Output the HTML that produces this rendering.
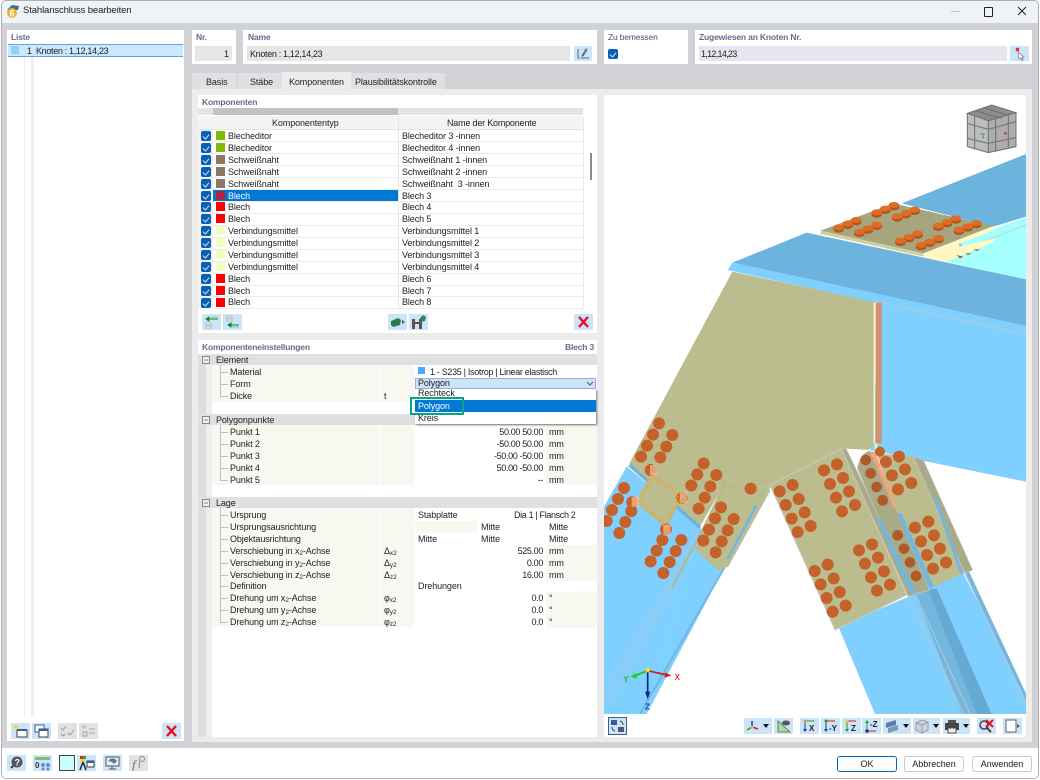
<!DOCTYPE html>
<html><head><meta charset="utf-8"><title>Stahlanschluss bearbeiten</title>
<style>
html,body{margin:0;padding:0;background:#fff}
body{width:1040px;height:780px;position:relative;overflow:hidden;font-family:"Liberation Sans",sans-serif;font-size:9px;color:#222}
.b{position:absolute}
.t{position:absolute;white-space:nowrap;line-height:12px;height:12px;letter-spacing:-.1px}
.n{letter-spacing:-.35px}
.k{letter-spacing:-.7px}
.h{color:#636b90;font-weight:bold;font-size:8.5px;letter-spacing:-.17px}
.t sub{font-size:6.5px;line-height:0;vertical-align:-1px}
.btn{position:absolute;background:#cce4f7;width:19px;height:16px}
.btn svg,.abs svg{position:absolute;left:0;top:0}
.g{background:#e2e2e2}
.c{position:absolute;left:201px;width:10px;height:10px;background:#0a5fb4;border-radius:2px}
.c:after{content:"";position:absolute;left:3px;top:1.5px;width:3px;height:5px;border:solid #cfe4ff;border-width:0 1px 1px 0;transform:rotate(40deg)}
.s{position:absolute;left:216px;width:9px;height:9px}
.rl{position:absolute;left:213px;width:370px;height:1px;background:#ececec}
.big{position:absolute;border-radius:3px;background:#fdfdfd;border:1px solid #c8c8c8;height:16px;line-height:15px;text-align:center;width:60px;font-size:9px;box-sizing:border-box}
</style></head><body>
<!-- window -->
<div class="b" style="left:1px;top:0;width:1038px;height:779px;background:#d2d2d6;border:1px solid #b0b0b0;box-sizing:border-box;border-radius:5px;overflow:hidden">
<div class="b" style="left:0;top:0;width:1038px;height:22px;background:#eef3fa"></div>
<div class="b" style="left:0;top:747px;width:1038px;height:32px;background:#fff"></div>
</div>
<svg class="b" style="left:6px;top:4px" width="14" height="15" viewBox="0 0 14 15"><path d="M1 6 L6 1 L13 2 L12 6 Z" fill="#3d6e8c"/><circle cx="6" cy="9" r="5" fill="#f0b428"/><text x="3.6" y="12.5" font-size="9" font-weight="bold" fill="#fff" font-family="Liberation Sans">6</text></svg>
<div class="t" style="left:23px;top:5px;font-size:9.5px;letter-spacing:-.12px;color:#1a1a1a">Stahlanschluss bearbeiten</div>
<div class="b" style="left:951px;top:11px;width:9px;height:1px;background:#c4c4c4"></div>
<div class="b" style="left:984px;top:7px;width:7px;height:8px;border:1px solid #222;border-radius:1px"></div>
<svg class="b" style="left:1017px;top:6px" width="10" height="10"><path d="M1 1L9 9M9 1L1 9" stroke="#222" stroke-width="1"/></svg>

<!-- list panel -->
<div class="b" style="left:7px;top:30px;width:177px;height:711px;background:#fff"></div>
<div class="t h" style="left:11px;top:31px">Liste</div>
<div class="b" style="left:24px;top:57px;width:1px;height:660px;background:#f0f0f0"></div>
<div class="b" style="left:31px;top:57px;width:3px;height:660px;background:#f0f0f0"></div>
<div class="b" style="left:8px;top:44px;width:175px;height:13px;background:#cce8ff;border:1px solid #5ba6e6;border-width:1px 0;box-sizing:border-box"></div>
<div class="b" style="left:11px;top:46px;width:8px;height:8px;background:#92d3f2"></div>
<div class="t" style="left:27px;top:45px">1</div>
<div class="t" style="left:36px;top:45px;letter-spacing:-.33px">Knoten : 1,12,14,23</div>
<div class="btn" style="left:11px;top:723px"><svg width="19" height="16"><path d="M6 7h10v7H6z" fill="#fff" stroke="#444"/><path d="M6 6h10v2H6z" fill="#3a5a9a"/><path d="M5 1l1 2 2 0-1.500 1.500.5 2-2-1-2 1 .5-2L2 3l2 0z" fill="#f4d020"/></svg></div>
<div class="btn" style="left:32px;top:723px"><svg width="19" height="16"><path d="M3 2h9v7H3z" fill="#fff" stroke="#3a5a9a"/><path d="M7 6h9v8H7z" fill="#fff" stroke="#444"/><path d="M7 6h9v2H7z" fill="#3a5a9a"/></svg></div>
<div class="btn g" style="left:58px;top:723px"><svg width="19" height="16"><path d="M3 5l2 2 3-4M10 10l2 2 4-5M3 11l2 2 2-2" stroke="#999" fill="none"/></svg></div>
<div class="btn g" style="left:79px;top:723px"><svg width="19" height="16"><path d="M3 3l2 2 2-3M4 9h4v4H4zM10 6h6M10 10h6" stroke="#aaa" fill="none"/></svg></div>
<div class="btn" style="left:162px;top:723px"><svg width="19" height="16"><path d="M5 3l9 10M14 3l-9 10" stroke="#e8101c" stroke-width="2.400"/></svg></div>

<!-- header panels -->
<div class="b" style="left:192px;top:30px;width:44px;height:34px;background:#fff"></div>
<div class="t h" style="left:196px;top:31px">Nr.</div>
<div class="b" style="left:195px;top:46px;width:37px;height:15px;background:#e6e6e6"></div>
<div class="t" style="left:224px;top:48px">1</div>
<div class="b" style="left:243px;top:30px;width:354px;height:34px;background:#fff"></div>
<div class="t h" style="left:248px;top:31px">Name</div>
<div class="b" style="left:247px;top:46px;width:323px;height:15px;background:#e6e6e6"></div>
<div class="t" style="left:250px;top:48px;letter-spacing:-.33px">Knoten : 1,12,14,23</div>
<div class="btn" style="left:574px;top:46px;height:15px;width:18px"><svg width="18" height="15"><path d="M4 3v9h2M7 12h8M8 10l4-7 1 1-4 6z" stroke="#5a6a70" fill="none"/></svg></div>
<div class="b" style="left:604px;top:30px;width:84px;height:34px;background:#fff"></div>
<div class="t h" style="left:608px;top:31px;font-weight:normal;color:#4a5278">Zu bemessen</div>
<div class="c" style="left:608px;top:49px"></div>
<div class="b" style="left:695px;top:30px;width:337px;height:34px;background:#fff"></div>
<div class="t h" style="left:699px;top:31px">Zugewiesen an Knoten Nr.</div>
<div class="b" style="left:699px;top:46px;width:308px;height:15px;background:#e6e6f0"></div>
<div class="t k" style="left:701px;top:48px">1,12,14,23</div>
<div class="btn" style="left:1010px;top:46px;height:15px"><svg width="19" height="15"><path d="M8 6l6 5-2 .5 1 2.500-1 .5-1-2.500-2 1z" fill="#fff" stroke="#777" stroke-width=".7"/><path d="M6 2l3 3M9 2L6 5" stroke="#e01020" stroke-width="1.300"/></svg></div>

<!-- tabs -->
<div class="b" style="left:192px;top:73px;width:45px;height:16px;background:#e0e0e4"></div>
<div class="b" style="left:238px;top:73px;width:44px;height:16px;background:#e0e0e4"></div>
<div class="b" style="left:351px;top:73px;width:94px;height:16px;background:#e0e0e4"></div>
<div class="b" style="left:192px;top:89px;width:840px;height:653px;background:#ececec"></div>
<div class="b" style="left:282px;top:72px;width:69px;height:17px;background:#ececec"></div>
<div class="t" style="left:206px;top:76px">Basis</div>
<div class="t" style="left:250px;top:76px">Stäbe</div>
<div class="t" style="left:289px;top:76px">Komponenten</div>
<div class="t" style="left:355px;top:76px">Plausibilitätskontrolle</div>

<!-- Komponenten panel -->
<div class="b" style="left:198px;top:95px;width:399px;height:238px;background:#fff"></div>
<div class="t h" style="left:202px;top:96px">Komponenten</div>
<div class="b" style="left:198px;top:108px;width:15px;height:7px;background:#e4e4e4"></div>
<div class="b" style="left:213px;top:108px;width:185px;height:7px;background:#c2c2c2"></div>
<div class="b" style="left:398px;top:108px;width:185px;height:7px;background:#e4e4e4"></div>
<div class="b" style="left:198px;top:116px;width:385px;height:14px;background:#f4f4f4;border-bottom:1px solid #e2e2e2;box-sizing:border-box"></div>
<div class="b" style="left:198px;top:130px;width:15px;height:178px;background:#f0f0f0"></div>
<div class="b" style="left:398px;top:116px;width:1px;height:192px;background:#e4e4e4"></div>
<div class="b" style="left:583px;top:116px;width:1px;height:192px;background:#eaeaea"></div>
<div class="b" style="left:590px;top:153px;width:2px;height:27px;background:#8a8a8a"></div>
<div class="t" style="left:272px;top:117px">Komponententyp</div>
<div class="t" style="left:447px;top:117px;letter-spacing:-.2px">Name der Komponente</div>

<div class="b" style="left:213px;top:190px;width:185px;height:12px;background:#0078d4"></div>
<div class="rl" style="top:141px"></div><div class="rl" style="top:153px"></div><div class="rl" style="top:165px"></div><div class="rl" style="top:177px"></div><div class="rl" style="top:189px"></div><div class="rl" style="top:201px"></div><div class="rl" style="top:213px"></div><div class="rl" style="top:225px"></div><div class="rl" style="top:237px"></div><div class="rl" style="top:249px"></div><div class="rl" style="top:261px"></div><div class="rl" style="top:273px"></div><div class="rl" style="top:285px"></div><div class="rl" style="top:296px"></div><div class="rl" style="top:308px"></div>

<div class="c" style="top:131px"></div><div class="s" style="top:131px;background:#7fba00"></div><div class="t" style="left:228px;top:130px">Blecheditor</div><div class="t" style="left:402px;top:130px">Blecheditor 3 -innen</div>
<div class="c" style="top:143px"></div><div class="s" style="top:143px;background:#7fba00"></div><div class="t" style="left:228px;top:142px">Blecheditor</div><div class="t" style="left:402px;top:142px">Blecheditor 4 -innen</div>
<div class="c" style="top:155px"></div><div class="s" style="top:155px;background:#8c7864"></div><div class="t" style="left:228px;top:154px">Schweißnaht</div><div class="t" style="left:402px;top:154px">Schweißnaht 1 -innen</div>
<div class="c" style="top:167px"></div><div class="s" style="top:167px;background:#8c7864"></div><div class="t" style="left:228px;top:166px">Schweißnaht</div><div class="t" style="left:402px;top:166px">Schweißnaht 2 -innen</div>
<div class="c" style="top:179px"></div><div class="s" style="top:179px;background:#8c7864"></div><div class="t" style="left:228px;top:178px">Schweißnaht</div><div class="t" style="left:402px;top:178px">Schweißnaht&nbsp; 3 -innen</div>
<div class="c" style="top:191px"></div><div class="s" style="top:191px;background:#b3243c"></div><div class="t" style="left:228px;top:190px;color:#fff">Blech</div><div class="t" style="left:402px;top:190px">Blech 3</div>
<div class="c" style="top:202px"></div><div class="s" style="top:202px;background:#f00"></div><div class="t" style="left:228px;top:201px">Blech</div><div class="t" style="left:402px;top:201px">Blech 4</div>
<div class="c" style="top:214px"></div><div class="s" style="top:214px;background:#f00"></div><div class="t" style="left:228px;top:213px">Blech</div><div class="t" style="left:402px;top:213px">Blech 5</div>
<div class="c" style="top:226px"></div><div class="s" style="top:226px;background:#efffc0"></div><div class="t" style="left:228px;top:225px">Verbindungsmittel</div><div class="t" style="left:402px;top:225px">Verbindungsmittel 1</div>
<div class="c" style="top:238px"></div><div class="s" style="top:238px;background:#efffc0"></div><div class="t" style="left:228px;top:237px">Verbindungsmittel</div><div class="t" style="left:402px;top:237px">Verbindungsmittel 2</div>
<div class="c" style="top:250px"></div><div class="s" style="top:250px;background:#efffc0"></div><div class="t" style="left:228px;top:249px">Verbindungsmittel</div><div class="t" style="left:402px;top:249px">Verbindungsmittel 3</div>
<div class="c" style="top:262px"></div><div class="s" style="top:262px;background:#efffc0"></div><div class="t" style="left:228px;top:261px">Verbindungsmittel</div><div class="t" style="left:402px;top:261px">Verbindungsmittel 4</div>
<div class="c" style="top:274px"></div><div class="s" style="top:274px;background:#f00"></div><div class="t" style="left:228px;top:273px">Blech</div><div class="t" style="left:402px;top:273px">Blech 6</div>
<div class="c" style="top:286px"></div><div class="s" style="top:286px;background:#f00"></div><div class="t" style="left:228px;top:285px">Blech</div><div class="t" style="left:402px;top:285px">Blech 7</div>
<div class="c" style="top:298px"></div><div class="s" style="top:298px;background:#f00"></div><div class="t" style="left:228px;top:296px">Blech</div><div class="t" style="left:402px;top:296px">Blech 8</div>

<div class="btn" style="left:202px;top:314px"><svg width="19" height="16"><path d="M4 9h5v2H4zM4 12h5v2H4z" fill="#eee" stroke="#999" stroke-width=".6"/><path d="M4 5h12M4 5l3-2v4z" stroke="#0a8a28" fill="#0a8a28"/><path d="M9 3h7" stroke="#8c8"/></svg></div>
<div class="btn" style="left:223px;top:314px"><svg width="19" height="16"><path d="M4 2h5v2H4zM4 5h5v2H4z" fill="#eee" stroke="#999" stroke-width=".6"/><path d="M5 11h11M5 11l3-2v4z" stroke="#0a8a28" fill="#0a8a28"/><path d="M9 13h7" stroke="#8c8"/></svg></div>
<div class="btn" style="left:388px;top:314px"><svg width="19" height="16"><path d="M3 7l7-3 3 2-1 5-7 2-2-2z" fill="#2a7a50"/><path d="M14 6l3 2-3 2z" fill="#555"/></svg></div>
<div class="btn" style="left:409px;top:314px"><svg width="19" height="16"><path d="M3 5h10v10H3z" fill="#555"/><path d="M6 5h4v3H6z" fill="#ddd"/><path d="M6 10h4v5H6z" fill="#ddd"/><path d="M11 4l3-3 3 2-1 4-4 1z" fill="#2a8a58"/></svg></div>
<div class="btn" style="left:574px;top:314px"><svg width="19" height="16"><path d="M5 3l9 10M14 3l-9 10" stroke="#e8101c" stroke-width="2.400"/></svg></div>

<!-- settings panel -->
<div class="b" style="left:198px;top:340px;width:399px;height:397px;background:#fff"></div>
<div class="t h" style="left:202px;top:341px">Komponenteneinstellungen</div>
<div class="t h" style="left:565px;top:341px">Blech 3</div>
<div class="b" style="left:198px;top:354px;width:8px;height:383px;background:#dedede"></div>
<div class="b" style="left:206px;top:354px;width:6px;height:383px;background:#efefef"></div>
<div class="b" style="left:198px;top:354px;width:399px;height:11px;background:#e0e0e0"></div>
<div class="b" style="left:198px;top:414px;width:399px;height:11px;background:#e0e0e0"></div>
<div class="b" style="left:198px;top:497px;width:399px;height:11px;background:#e0e0e0"></div>
<div class="b" style="left:212px;top:365px;width:168px;height:37px;background:#f8f8f0"></div>
<div class="b" style="left:381px;top:365px;width:33px;height:37px;background:#f8f8f0"></div>
<div class="b" style="left:212px;top:425px;width:168px;height:60px;background:#f8f8f0"></div>
<div class="b" style="left:381px;top:425px;width:33px;height:60px;background:#f8f8f0"></div>
<div class="b" style="left:546px;top:425px;width:51px;height:60px;background:#f8f8f0"></div>
<div class="b" style="left:212px;top:508px;width:168px;height:119px;background:#f8f8f0"></div>
<div class="b" style="left:381px;top:508px;width:33px;height:119px;background:#f8f8f0"></div>
<div class="b" style="left:546px;top:545px;width:51px;height:36px;background:#f8f8f0"></div>
<div class="b" style="left:546px;top:592px;width:51px;height:36px;background:#f8f8f0"></div>
<div class="b" style="left:415px;top:521px;width:62px;height:12px;background:#f8f8f0"></div>
<svg class="b" style="left:198px;top:354px" width="40" height="280" fill="none" stroke="#c0c0c0" stroke-width="1"><path d="M22.500 11V42.500H30M22.500 18.500H30M22.500 30.500H30M22.500 71V126.500H30M22.500 78.500H30M22.500 90.500H30M22.500 102.500H30M22.500 114.500H30M22.500 154V268.500H30M22.500 161.500H30M22.500 173.500H30M22.500 185.500H30M22.500 197.500H30M22.500 209.500H30M22.500 221.500H30M22.500 232.500H30M22.500 244.500H30M22.500 256.500H30"/><path d="M4.500 2.500h7v7h-7zM6 6h4M4.500 62.500h7v7h-7zM6 66h4M4.500 145.500h7v7h-7zM6 149h4" stroke="#888" fill="#eee"/></svg>
<div class="t" style="left:216px;top:354px">Element</div>
<div class="t" style="left:230px;top:366px">Material</div>
<div class="t" style="left:230px;top:378px">Form</div>
<div class="t" style="left:230px;top:390px">Dicke</div>
<div class="t" style="left:384px;top:390px">t</div>
<div class="b" style="left:418px;top:367px;width:7px;height:7px;background:#4da6ff"></div>
<div class="t" style="left:430px;top:366px;letter-spacing:-.32px">1 - S235 | Isotrop | Linear elastisch</div>
<div class="t" style="left:216px;top:414px">Polygonpunkte</div>
<div class="t" style="left:230px;top:426px">Punkt 1</div><div class="t n" style="right:497px;top:426px">50.00 50.00</div><div class="t" style="left:549px;top:426px">mm</div>
<div class="t" style="left:230px;top:438px">Punkt 2</div><div class="t n" style="right:497px;top:438px">-50.00 50.00</div><div class="t" style="left:549px;top:438px">mm</div>
<div class="t" style="left:230px;top:450px">Punkt 3</div><div class="t n" style="right:497px;top:450px">-50.00 -50.00</div><div class="t" style="left:549px;top:450px">mm</div>
<div class="t" style="left:230px;top:462px">Punkt 4</div><div class="t n" style="right:497px;top:462px">50.00 -50.00</div><div class="t" style="left:549px;top:462px">mm</div>
<div class="t" style="left:230px;top:474px">Punkt 5</div><div class="t n" style="right:497px;top:474px">--</div><div class="t" style="left:549px;top:474px">mm</div>
<div class="t" style="left:216px;top:497px">Lage</div>
<div class="t" style="left:230px;top:509px">Ursprung</div><div class="t" style="left:418px;top:509px">Stabplatte</div><div class="t n" style="left:514px;top:509px">Dia 1 | Flansch 2</div>
<div class="t" style="left:230px;top:521px">Ursprungsausrichtung</div><div class="t" style="left:481px;top:521px">Mitte</div><div class="t" style="left:549px;top:521px">Mitte</div>
<div class="t" style="left:230px;top:533px">Objektausrichtung</div><div class="t" style="left:418px;top:533px">Mitte</div><div class="t" style="left:481px;top:533px">Mitte</div><div class="t" style="left:549px;top:533px">Mitte</div>
<div class="t" style="left:230px;top:545px">Verschiebung in x<sub>2</sub>-Achse</div><div class="t" style="left:384px;top:545px">Δ<sub>x2</sub></div><div class="t n" style="right:497px;top:545px">525.00</div><div class="t" style="left:549px;top:545px">mm</div>
<div class="t" style="left:230px;top:557px">Verschiebung in y<sub>2</sub>-Achse</div><div class="t" style="left:384px;top:557px">Δ<sub>y2</sub></div><div class="t n" style="right:497px;top:557px">0.00</div><div class="t" style="left:549px;top:557px">mm</div>
<div class="t" style="left:230px;top:569px">Verschiebung in z<sub>2</sub>-Achse</div><div class="t" style="left:384px;top:569px">Δ<sub>z2</sub></div><div class="t n" style="right:497px;top:569px">16.00</div><div class="t" style="left:549px;top:569px">mm</div>
<div class="t" style="left:230px;top:580px">Definition</div><div class="t" style="left:418px;top:580px">Drehungen</div>
<div class="t" style="left:230px;top:592px">Drehung um x<sub>2</sub>-Achse</div><div class="t" style="left:384px;top:592px">φ<sub>x2</sub></div><div class="t n" style="right:497px;top:592px">0.0</div><div class="t" style="left:549px;top:592px">°</div>
<div class="t" style="left:230px;top:604px">Drehung um y<sub>2</sub>-Achse</div><div class="t" style="left:384px;top:604px">φ<sub>y2</sub></div><div class="t n" style="right:497px;top:604px">0.0</div><div class="t" style="left:549px;top:604px">°</div>
<div class="t" style="left:230px;top:616px">Drehung um z<sub>2</sub>-Achse</div><div class="t" style="left:384px;top:616px">φ<sub>z2</sub></div><div class="t n" style="right:497px;top:616px">0.0</div><div class="t" style="left:549px;top:616px">°</div>

<!-- dropdown -->
<div class="b" style="left:415px;top:389px;width:181px;height:35px;background:#fff;box-shadow:1px 1px 2px #777"></div>
<div class="b" style="left:415px;top:378px;width:181px;height:11px;background:#cce4f7;border:1px solid #a0a8e4;box-sizing:border-box"></div>
<div class="t" style="left:418px;top:377px">Polygon</div>
<svg class="b" style="left:586px;top:381px" width="8" height="6"><path d="M1 1l3 3 3-3" stroke="#555" fill="none"/></svg>
<div class="t" style="left:418px;top:387px">Rechteck</div>
<div class="b" style="left:415px;top:400px;width:181px;height:12px;background:#0078d4"></div>
<div class="t" style="left:418px;top:400px;color:#fff">Polygon</div>
<div class="b" style="left:413px;top:401px;width:1px;height:10px;background:#fff"></div>
<div class="b" style="left:410px;top:397px;width:54px;height:18px;border:2px solid #00a884;box-sizing:border-box"></div>
<div class="t" style="left:418px;top:412px">Kreis</div>

<!-- viewport -->
<div class="b" style="left:604px;top:95px;width:422px;height:642px;background:#fff;border-radius:3px"></div>
<svg class="b" style="left:604px;top:95px" width="422" height="619" viewBox="604 95 422 619">
<g transform="translate(600,410) scale(.33333)">
<path d="M12 290L80 170 300 350 140 912H12Z" fill="#7fcfff"/>
<path d="M140 912L300 350 375 470 140 912Z" fill="#7fcfff"/>
<path d="M715 650L1090 490 1278 860V912H825Z" fill="#7fcfff"/>
<path d="M945 550L985 540 1170 912H1085Z" fill="#74b7de"/>
<path d="M985 540L1010 535 1175 912H1130Z" fill="#66aad4"/>
<path d="M1105 480L1278 850V872L1095 490Z" fill="#74b7de"/>
<path d="M925 555L1090 912M945 550L1110 912M1095 490L1278 880" stroke="#b8c8d0" stroke-width="3" fill="none"/>
<path d="M12 860L295 360M30 880L305 370" stroke="#b8c4cc" stroke-width="3" fill="none"/>
<path d="M120 912L375 470" stroke="#74b7de" stroke-width="6" fill="none"/>
</g>
<g transform="translate(600,90) scale(.33333)">
<path d="M905 340L1278 192V380L1180 410Z" fill="#6cb4de"/>
<path d="M1040 515L1085 480 1085 452 1278 382V568Z" fill="#a6ffff"/>
<path d="M1085 480L1278 405" stroke="#c0d0d0" stroke-width="3"/>
<path d="M1075 460H1085V485L1075 490Z" fill="#7fcfff"/>
<path d="M970 490L1180 408 1183 420 1075 462 1078 470 1183 445 1183 455 1040 515 1010 510 970 500Z" fill="#fff8c0"/>
<path d="M662 422L880 340 1180 408 970 490Z" fill="#a5a67f"/>
<path d="M662 422L970 490V500L662 432Z" fill="#cfcf9f"/>
<g fill="#b5541c"><ellipse cx="716" cy="418" rx="16" ry="10"/><ellipse cx="743" cy="407" rx="16" ry="10"/><ellipse cx="769" cy="396" rx="16" ry="10"/><ellipse cx="778" cy="431" rx="16" ry="10"/><ellipse cx="804" cy="421" rx="16" ry="10"/><ellipse cx="830" cy="410" rx="16" ry="10"/><ellipse cx="830" cy="373" rx="16" ry="10"/><ellipse cx="856" cy="362" rx="16" ry="10"/><ellipse cx="882" cy="351" rx="16" ry="10"/><ellipse cx="892" cy="385" rx="16" ry="10"/><ellipse cx="918" cy="375" rx="16" ry="10"/><ellipse cx="944" cy="365" rx="16" ry="10"/><ellipse cx="901" cy="458" rx="16" ry="10"/><ellipse cx="927" cy="447" rx="16" ry="10"/><ellipse cx="953" cy="436" rx="16" ry="10"/><ellipse cx="963" cy="471" rx="16" ry="10"/><ellipse cx="989" cy="461" rx="16" ry="10"/><ellipse cx="1015" cy="450" rx="16" ry="10"/><ellipse cx="1015" cy="413" rx="16" ry="10"/><ellipse cx="1041" cy="402" rx="16" ry="10"/><ellipse cx="1067" cy="391" rx="16" ry="10"/><ellipse cx="1077" cy="425" rx="16" ry="10"/><ellipse cx="1103" cy="415" rx="16" ry="10"/><ellipse cx="1129" cy="405" rx="16" ry="10"/></g>
<g fill="#de6c22"><ellipse cx="716" cy="412" rx="16" ry="9"/><ellipse cx="743" cy="401" rx="16" ry="9"/><ellipse cx="769" cy="390" rx="16" ry="9"/><ellipse cx="778" cy="425" rx="16" ry="9"/><ellipse cx="804" cy="415" rx="16" ry="9"/><ellipse cx="830" cy="404" rx="16" ry="9"/><ellipse cx="830" cy="367" rx="16" ry="9"/><ellipse cx="856" cy="356" rx="16" ry="9"/><ellipse cx="882" cy="345" rx="16" ry="9"/><ellipse cx="892" cy="379" rx="16" ry="9"/><ellipse cx="918" cy="369" rx="16" ry="9"/><ellipse cx="944" cy="359" rx="16" ry="9"/><ellipse cx="901" cy="452" rx="16" ry="9"/><ellipse cx="927" cy="441" rx="16" ry="9"/><ellipse cx="953" cy="430" rx="16" ry="9"/><ellipse cx="963" cy="465" rx="16" ry="9"/><ellipse cx="989" cy="455" rx="16" ry="9"/><ellipse cx="1015" cy="444" rx="16" ry="9"/><ellipse cx="1015" cy="407" rx="16" ry="9"/><ellipse cx="1041" cy="396" rx="16" ry="9"/><ellipse cx="1067" cy="385" rx="16" ry="9"/><ellipse cx="1077" cy="419" rx="16" ry="9"/><ellipse cx="1103" cy="409" rx="16" ry="9"/><ellipse cx="1129" cy="399" rx="16" ry="9"/></g>
<path d="M1070 495l20 5-10 5zM1095 490l20 0-10 5zM1120 478l20 0-10 5z" fill="#b5541c"/>
<path d="M397 518L620 428 1278 568V708Z" fill="#6cb4de"/>
<path d="M845 640L1278 735V1175L810 1080Z" fill="#7fcfff"/>
<path d="M397 545L825 635V1060L805 1080 725 1075 510 1195 380 1170 300 1310 88 1120Z" fill="#bcbd8f"/>
<path d="M383 540L397 518 1278 708V735Z" fill="#7fcfff"/>
<path d="M825 632L1278 732" stroke="#b8c8d0" stroke-width="3"/>
<path d="M827 638H845V1060H827Z" fill="#d3906d"/>
<path d="M823 638V1060" stroke="#f2f2c8" stroke-width="5"/>
<path d="M824 1060h8v20h-8z" fill="#f4f4a0"/>
<path d="M88 1125L300 1312" stroke="#6cb4de" stroke-width="10"/>
</g>
<g transform="translate(600,410) scale(.33333)">
<path d="M285 420L380 210 510 235 385 470 355 480Z" fill="#bcbd8f"/>
<path d="M215 535L305 365 380 210" stroke="#b5b68a" stroke-width="6" fill="none"/>
<path d="M375 470L505 235M385 465L510 240" stroke="#b8bca0" stroke-width="4" fill="none"/>
<path d="M465 285L472 290 385 450 380 445Z" fill="#74b7de"/>
<path d="M510 225L725 115 920 555 705 660Z" fill="#bcbd8f" stroke="#c9c9c0" stroke-width="3"/>
<path d="M725 115L738 115 950 552 925 560Z" fill="#a9ab88" stroke="#c4c8c0" stroke-width="2"/>
<path d="M830 130L940 140 1115 480 1000 530 890 300Z" fill="#bcbd8f"/>
<path d="M940 140L970 150 1118 480 1095 490Z" fill="#a9ab88" stroke="#c4c8c0" stroke-width="2"/>
<path d="M1000 262L1010 262 1090 490 1080 490Z" fill="#74b7de"/>
<path d="M772 175Q780 130 810 122L890 300 988 540 945 552 830 310Z" fill="#a9ab88" stroke="#c8ccc0" stroke-width="2"/>
<path d="M810 125H825L892 295H882Z" fill="#f0a580"/>
<path d="M892 310H905L1002 530 988 538Z" fill="#74b7de"/>
<path d="M830 328H842L950 550 935 555Z" fill="#74b7de"/>
<path d="M158 190L245 258 198 352 108 275Z" fill="#bcbd8f"/>
<g fill="#c5622a">
<circle cx="177" cy="40" r="18"/><circle cx="159" cy="74" r="18"/><circle cx="217" cy="75" r="18"/><circle cx="141" cy="107" r="18"/><circle cx="199" cy="110" r="18"/><circle cx="123" cy="140" r="18"/><circle cx="181" cy="142" r="18"/><circle cx="152" cy="180" r="18"/>
<circle cx="311" cy="160" r="18"/><circle cx="292" cy="193" r="18"/><circle cx="349" cy="195" r="18"/><circle cx="274" cy="226" r="18"/><circle cx="331" cy="229" r="18"/><circle cx="314" cy="263" r="18"/><circle cx="296" cy="296" r="18"/><circle cx="246" cy="264" r="18"/>
<circle cx="72" cy="234" r="18"/><circle cx="54" cy="267" r="18"/><circle cx="36" cy="300" r="18"/><circle cx="97" cy="276" r="18"/><circle cx="94" cy="303" r="18"/><circle cx="76" cy="336" r="18"/><circle cx="58" cy="369" r="18"/><circle cx="20" cy="333" r="18"/>
<circle cx="198" cy="358" r="18"/><circle cx="187" cy="390" r="18"/><circle cx="244" cy="390" r="18"/><circle cx="170" cy="422" r="18"/><circle cx="227" cy="423" r="18"/><circle cx="152" cy="454" r="18"/><circle cx="209" cy="456" r="18"/><circle cx="190" cy="489" r="18"/>
<circle cx="363" cy="292" r="18"/><circle cx="345" cy="325" r="18"/><circle cx="401" cy="327" r="18"/><circle cx="327" cy="359" r="18"/><circle cx="383" cy="361" r="18"/><circle cx="310" cy="392" r="18"/><circle cx="365" cy="394" r="18"/><circle cx="347" cy="427" r="18"/><circle cx="452" cy="236" r="18"/>
<circle cx="711" cy="163" r="18"/><circle cx="672" cy="181" r="18"/><circle cx="729" cy="204" r="18"/><circle cx="690" cy="222" r="18"/><circle cx="747" cy="244" r="18"/><circle cx="708" cy="263" r="18"/><circle cx="765" cy="285" r="18"/><circle cx="726" cy="304" r="18"/>
<circle cx="578" cy="225" r="18"/><circle cx="539" cy="244" r="18"/><circle cx="596" cy="267" r="18"/><circle cx="557" cy="285" r="18"/><circle cx="614" cy="307" r="18"/><circle cx="575" cy="326" r="18"/><circle cx="632" cy="348" r="18"/><circle cx="593" cy="366" r="18"/>
<circle cx="816" cy="403" r="18"/><circle cx="777" cy="421" r="18"/><circle cx="834" cy="443" r="18"/><circle cx="795" cy="461" r="18"/><circle cx="852" cy="484" r="18"/><circle cx="813" cy="502" r="18"/><circle cx="870" cy="524" r="18"/><circle cx="831" cy="542" r="18"/>
<circle cx="683" cy="464" r="18"/><circle cx="644" cy="483" r="18"/><circle cx="701" cy="505" r="18"/><circle cx="662" cy="523" r="18"/><circle cx="719" cy="546" r="18"/><circle cx="680" cy="564" r="18"/><circle cx="737" cy="587" r="18"/><circle cx="698" cy="605" r="18"/>
<circle cx="858" cy="156" r="18"/><circle cx="897" cy="140" r="18"/><circle cx="915" cy="178" r="18"/><circle cx="876" cy="196" r="18"/><circle cx="934" cy="219" r="18"/><circle cx="894" cy="238" r="18"/><circle cx="840" cy="125" r="15"/>
<circle cx="985" cy="335" r="18"/><circle cx="945" cy="353" r="18"/><circle cx="1002" cy="376" r="18"/><circle cx="963" cy="394" r="18"/><circle cx="1020" cy="416" r="18"/><circle cx="981" cy="435" r="18"/><circle cx="1038" cy="457" r="18"/><circle cx="999" cy="476" r="18"/>
</g>
<g fill="#b05a2c"><circle cx="797" cy="150" r="16"/><circle cx="812" cy="190" r="16"/><circle cx="830" cy="231" r="16"/><circle cx="848" cy="271" r="16"/><circle cx="893" cy="376" r="16"/><circle cx="912" cy="416" r="16"/><circle cx="930" cy="457" r="16"/><circle cx="948" cy="498" r="16"/></g>
<path d="M158 190L245 258 198 352 108 275ZM158 200L235 262 195 342 118 275Z" fill="none" stroke="#e8a63a" stroke-width="2.500"/>
<path d="M150 165h20v30h-20zM240 245h22v35h-22zM95 260h22v30H95zM190 345h22v32h-22z" fill="#f6d9b8" opacity=".55"/>
<!-- axes -->
<path d="M143 782L200 795" stroke="#d01818" stroke-width="5"/><path d="M195 787L214 796 194 803Z" fill="#e01818"/>
<path d="M143 782L105 797" stroke="#20c020" stroke-width="5"/><path d="M108 789L92 800 110 806Z" fill="#20d020"/>
<path d="M143 782V848" stroke="#0a2a8a" stroke-width="5"/><path d="M135 845H151L143 868Z" fill="#0a2a8a"/>
<circle cx="143" cy="780" r="7" fill="#f0e020"/>
<text x="224" y="810" font-size="24" font-weight="bold" fill="#f03030" font-family="Liberation Sans">X</text>
<text x="70" y="816" font-size="24" font-weight="bold" fill="#30b030" font-family="Liberation Sans">Y</text>
<text x="135" y="898" font-size="24" font-weight="bold" fill="#1a3aa8" font-family="Liberation Sans">Z</text>
</g>
<!-- cube -->
<g transform="translate(600,90) scale(.33333)">
<path d="M1102 70L1175 45 1248 68 1165 92Z" fill="#8c8c8c"/>
<path d="M1102 70L1165 92V188L1102 170Z" fill="#bdbdbd"/>
<path d="M1165 92L1248 68V170L1165 188Z" fill="#adadad"/>
<path d="M1102 70L1165 92 1248 68 1175 45ZM1102 170L1165 188 1248 170V68M1165 92V188M1102 70V170M1102 100L1165 118 1248 95M1102 145L1165 160 1248 143M1124 78V178M1187 85V185M1225 75V175M1125 62L1205 85M1150 53L1225 76" fill="none" stroke="#6f6f6f" stroke-width="3"/>
<path d="M1140 132h12l-3 14" stroke="#3ca83c" stroke-width="3" fill="none"/>
<circle cx="1216" cy="130" r="4" fill="#c04040"/>
</g>
</svg>

<!-- viewport toolbar -->
<div class="btn" style="left:608px;top:717px;height:18px;box-sizing:border-box;border:1px solid #40608a"><svg width="17" height="16"><path d="M2 2h6v5H2z" fill="#3a5aa8"/><path d="M9 9h6v5H9z" fill="#557"/><path d="M11 3a4 4 0 0 1 3 4M6 13a4 4 0 0 1-3-4" stroke="#333" fill="none"/></svg></div>
<div class="btn" style="left:744px;top:718px;width:28px"><svg width="28" height="16"><path d="M8 9V3" stroke="#1a3aa8" stroke-width="1.500"/><path d="M8 9l6 2" stroke="#d02020" stroke-width="1.500"/><path d="M8 9l-5 3" stroke="#20a020" stroke-width="1.500"/><circle cx="8" cy="9" r="1.300" fill="#f0d020"/><path d="M19 6h6l-3 4z" fill="#111"/></svg></div>
<div class="btn" style="left:774px;top:718px"><svg width="19" height="16"><path d="M4 3v11h12z" fill="#b0d8a0" stroke="#5a8a5a"/><ellipse cx="12" cy="5" rx="4" ry="2.500" fill="#556"/></svg></div>
<div class="btn" style="left:800px;top:718px"><svg width="19" height="16"><path d="M5 3v10M5 3h9" stroke="#1a3aa8"/><path d="M5 3h9" stroke="#20a020"/><circle cx="5" cy="3" r="1.500" fill="#e8a020"/><path d="M3 11h4l-2 3z" fill="#1a3aa8"/><text x="9" y="13" font-size="8" font-weight="bold" fill="#222" font-family="Liberation Sans">X</text></svg></div>
<div class="btn" style="left:821px;top:718px"><svg width="19" height="16"><path d="M5 3v10" stroke="#1a3aa8"/><path d="M5 3h9" stroke="#d02020"/><circle cx="5" cy="3" r="1.500" fill="#20a020"/><path d="M3 11h4l-2 3z" fill="#1a3aa8"/><text x="8" y="13" font-size="8" font-weight="bold" fill="#222" font-family="Liberation Sans">-Y</text></svg></div>
<div class="btn" style="left:842px;top:718px"><svg width="19" height="16"><path d="M5 3v10" stroke="#20a020"/><path d="M5 3h9" stroke="#d02020"/><circle cx="5" cy="3" r="1.500" fill="#e8d020"/><path d="M3 11h4l-2 3z" fill="#20a020"/><text x="9" y="13" font-size="8" font-weight="bold" fill="#222" font-family="Liberation Sans">Z</text></svg></div>
<div class="btn" style="left:862px;top:718px"><svg width="19" height="16"><path d="M5 4v9" stroke="#20a020"/><path d="M5 13h9" stroke="#d02020"/><circle cx="5" cy="13" r="1.800" fill="#1a3aa8"/><path d="M3 5h4L5 2z" fill="#20a020"/><text x="8" y="9" font-size="8" font-weight="bold" fill="#222" font-family="Liberation Sans">-Z</text></svg></div>
<div class="btn" style="left:883px;top:718px;width:28px"><svg width="28" height="16"><path d="M3 5l10-3v5L3 10z" fill="#5a7ca8"/><path d="M5 10l10-3v5L5 15z" fill="#8098b8"/><path d="M20 6h6l-3 4z" fill="#111"/></svg></div>
<div class="btn" style="left:913px;top:718px;width:27px"><svg width="27" height="16"><path d="M3 5l6-3 6 2v8l-6 3-6-3z" fill="#c8d4e0" stroke="#99a"/><path d="M3 5l6 2 6-3M9 7v8" stroke="#99a" fill="none"/><path d="M20 6h6l-3 4z" fill="#111"/></svg></div>
<div class="btn" style="left:943px;top:718px;width:27px"><svg width="27" height="16"><path d="M5 2h8v3H5z" fill="#555"/><path d="M2 5h14v7H2z" fill="#444"/><path d="M5 10h8v5H5z" fill="#eee" stroke="#555"/><path d="M20 6h6l-3 4z" fill="#111"/></svg></div>
<div class="btn" style="left:977px;top:718px"><svg width="19" height="16"><circle cx="7" cy="7" r="4" fill="none" stroke="#444" stroke-width="1.500"/><path d="M10 10l4 4" stroke="#444" stroke-width="2"/><path d="M9 2l7 7M16 2L9 9" stroke="#e01020" stroke-width="2"/></svg></div>
<div class="btn" style="left:1003px;top:718px"><svg width="19" height="16"><path d="M3 2h10v12H3z" fill="#fff" stroke="#666"/><path d="M14 6l3 2-3 2z" fill="#555"/></svg></div>

<!-- bottom left -->
<div class="btn" style="left:7px;top:755px"><svg width="19" height="16"><path d="M4 13l3-3" stroke="#444" stroke-width="2"/><circle cx="10" cy="7" r="5.500" fill="#556"/><text x="7.500" y="10.500" font-size="9" font-weight="bold" fill="#fff" font-family="Liberation Sans">?</text></svg></div>
<div class="btn" style="left:33px;top:755px"><svg width="19" height="16"><path d="M2 2h15v3H2z" fill="#7ac070"/><text x="2" y="13" font-size="8" font-weight="bold" fill="#333" font-family="Liberation Sans">0</text><circle cx="10" cy="10" r="2" fill="#5a90e0"/><circle cx="15" cy="10" r="2" fill="#5a90e0"/><circle cx="10" cy="14" r="1.500" fill="#5a90e0"/><circle cx="15" cy="14" r="1.500" fill="#5a90e0"/></svg></div>
<div class="b" style="left:59px;top:755px;width:16px;height:16px;background:#c8ffff;border:1px solid #444;box-sizing:border-box"></div>
<div class="btn" style="left:77px;top:755px"><svg width="19" height="16"><path d="M3 1h3v3H3z" fill="#e02020"/><path d="M6 1h3v3H6z" fill="#30b030"/><path d="M4 4h4v3H4z" fill="#f0d020"/><path d="M6 7L3 15M6 7l3 8" stroke="#223" stroke-width="1.500"/><path d="M10 6h7v6h-7z" fill="#fff" stroke="#334"/><path d="M10 6h7v2h-7z" fill="#3a5a9a"/></svg></div>
<div class="btn" style="left:103px;top:755px"><svg width="19" height="16"><path d="M3 2h13v9H3z" fill="#e8f0f8" stroke="#556"/><path d="M5 6c3-4 7-3 9 0l-3 3-2-2z" fill="#5a7a9a"/><path d="M9 11v3M6 14h7" stroke="#556"/></svg></div>
<div class="btn g" style="left:129px;top:755px"><svg width="19" height="16"><text x="3" y="14" font-size="13" font-style="italic" fill="#777" font-family="Liberation Serif">f</text><text x="9" y="13" font-size="9" fill="#777" font-family="Liberation Sans">I</text><circle cx="13" cy="4" r="2.500" fill="none" stroke="#888"/></svg></div>

<!-- bottom buttons -->
<div class="big" style="left:837px;top:756px;border:1px solid #0067c0">OK</div>
<div class="big" style="left:904px;top:756px">Abbrechen</div>
<div class="big" style="left:972px;top:756px">Anwenden</div>
</body></html>
